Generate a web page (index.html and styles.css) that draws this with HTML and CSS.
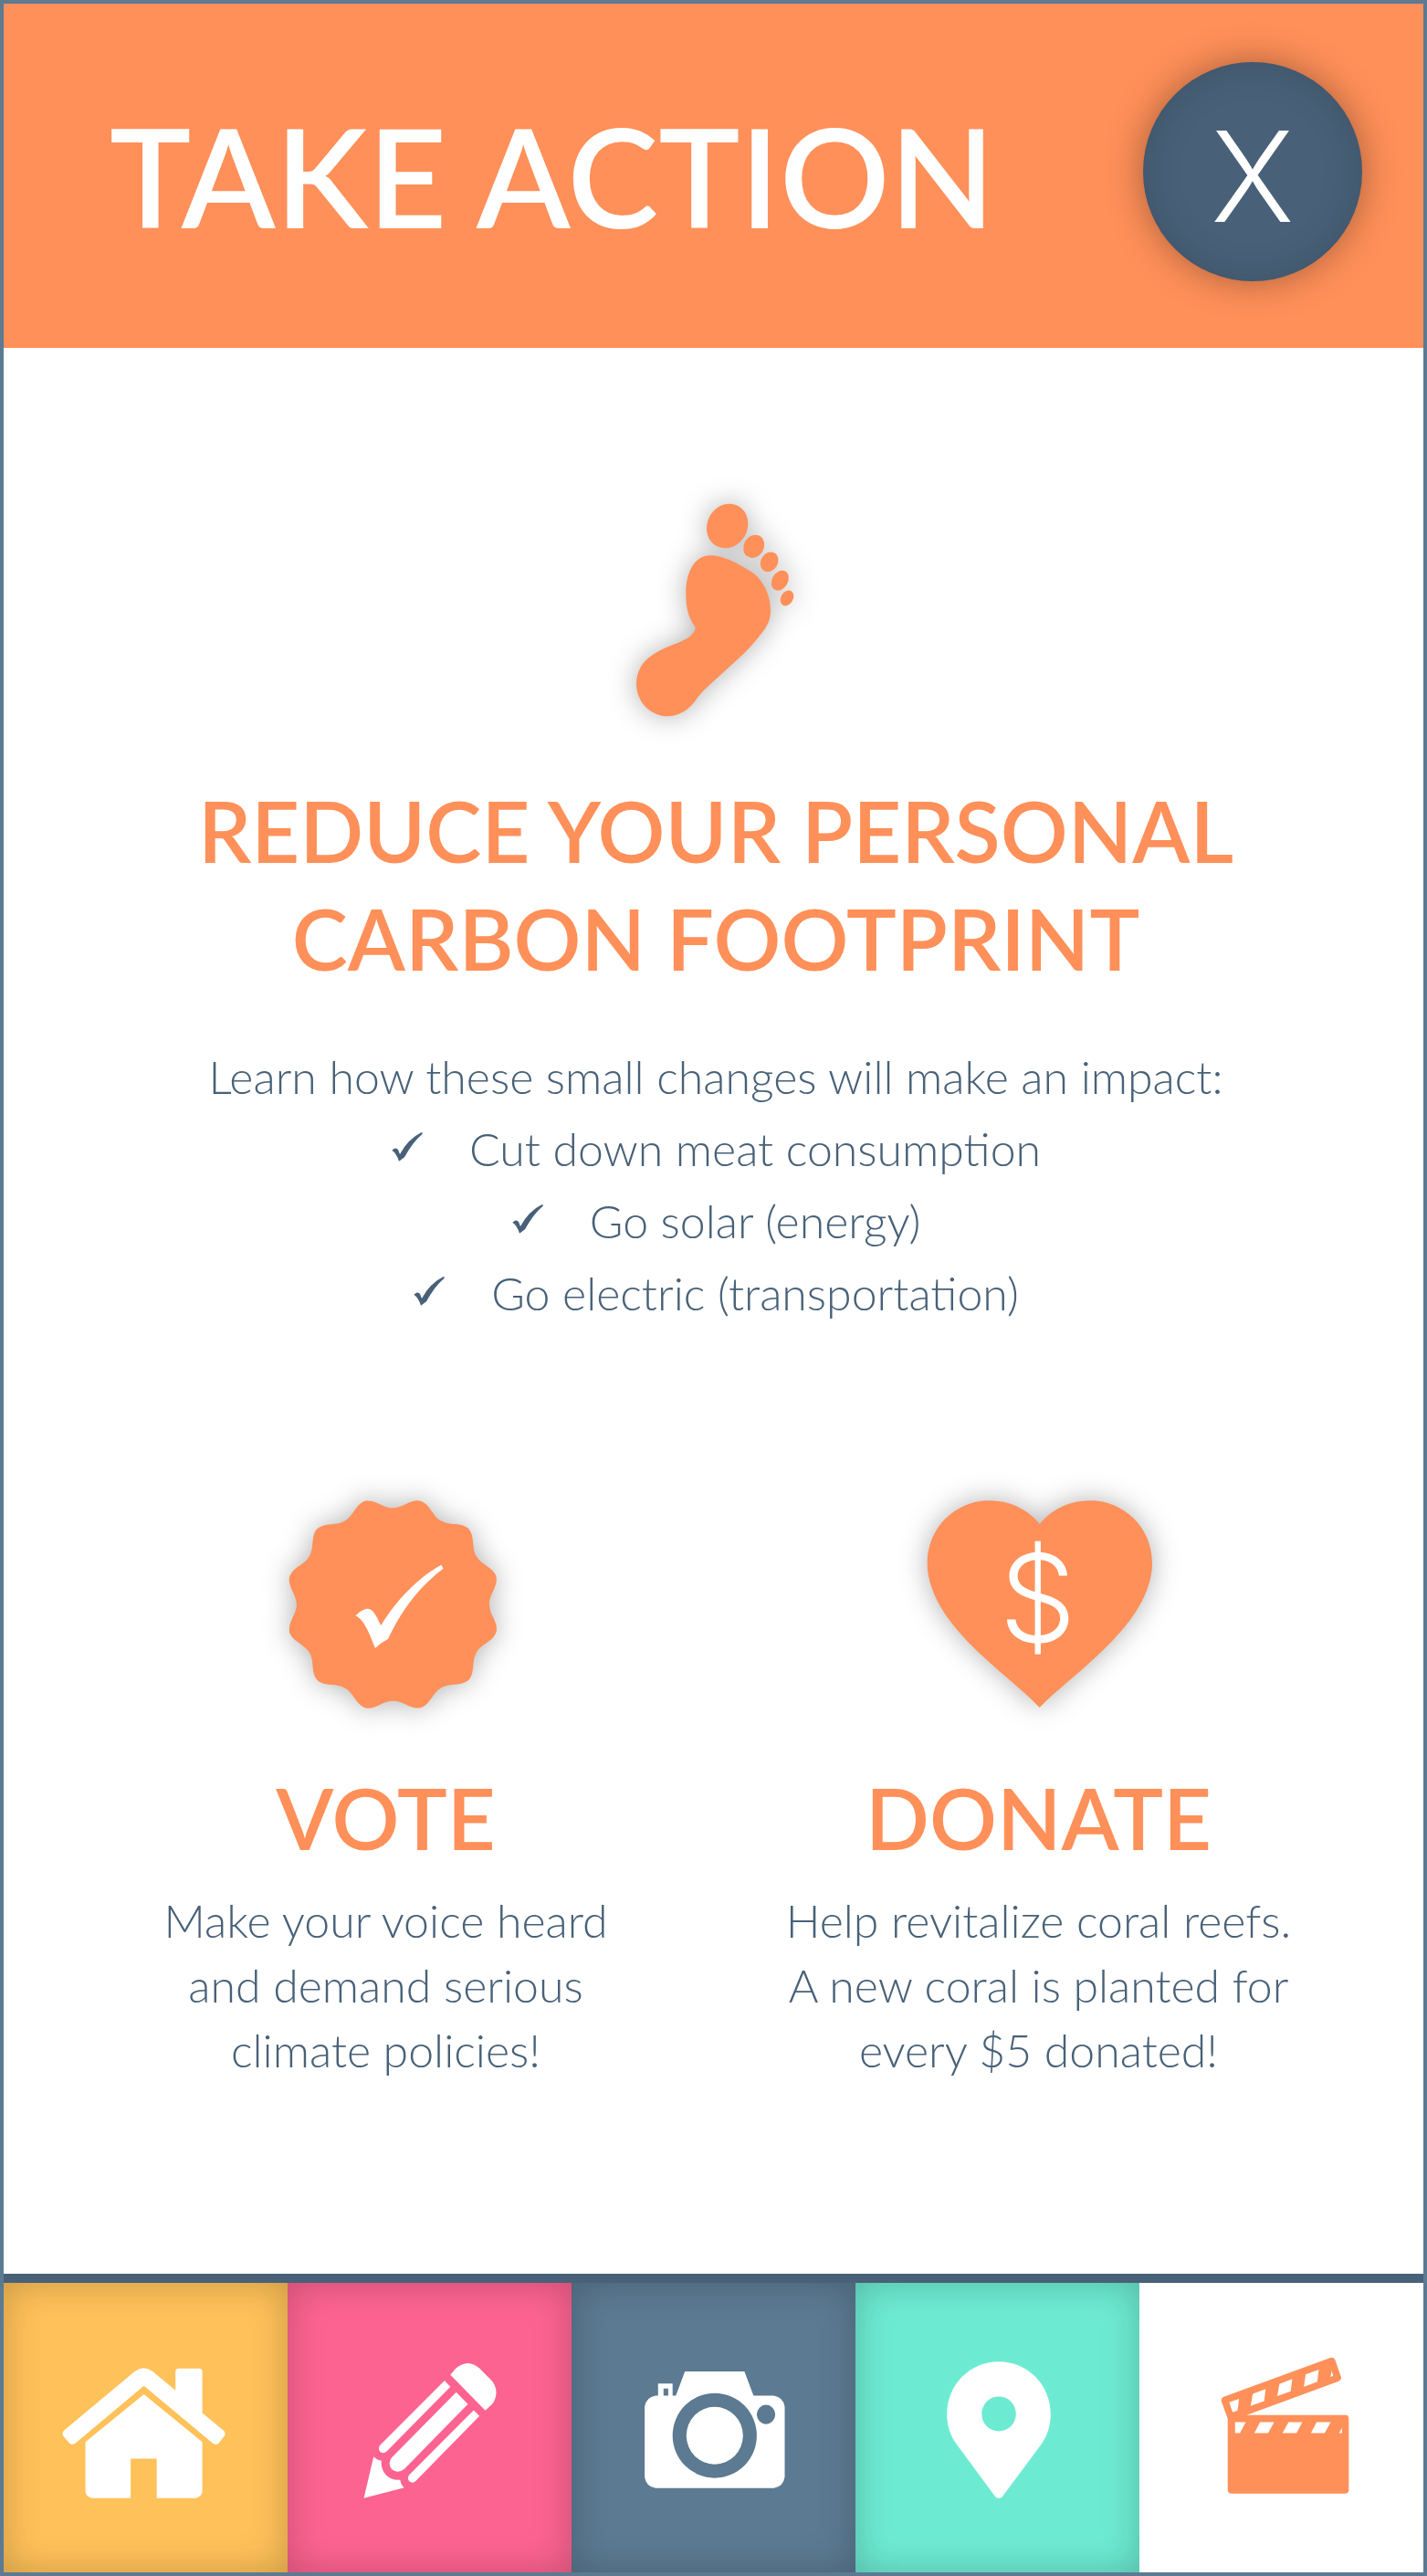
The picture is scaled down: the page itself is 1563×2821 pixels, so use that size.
FILE: index.html
```html
<!DOCTYPE html>
<html lang="en">
<head>
<meta charset="utf-8">
<meta name="viewport" content="width=device-width, initial-scale=1">
<title>Take Action</title>
<link rel="stylesheet" href="styles.css">
</head>
<body>
<div class="screen">
  <header class="header">
    <h1 class="title">TAKE ACTION</h1>
    <button class="close" type="button" aria-label="Close">X</button>
  </header>

  <main class="main">
    <section class="reduce">
      <svg class="icon foot" viewBox="10 0 720 870" aria-hidden="true">
        <path d="M352 265C400 265 450 297 478 313C522 338 550 390 550 445C550 468 545 485 532 505C510 535 490 560 462 587L350 690C330 708 315 722 303 742C280 773 250 793 212 793C155 793 109 745 109 686C109 650 127 615 158 595C200 565 240 558 275 538C290 529 306 513 302 499C285 475 272 450 272 388C272 320 300 265 352 265Z"/>
        <ellipse cx="408" cy="168" rx="66" ry="75" transform="rotate(28 408 168)"/>
        <ellipse cx="495" cy="235" rx="33" ry="39" transform="rotate(30 495 235)"/>
        <ellipse cx="546" cy="286" rx="28" ry="34" transform="rotate(30 546 286)"/>
        <ellipse cx="581" cy="347" rx="26" ry="35" transform="rotate(30 581 347)"/>
        <ellipse cx="604" cy="405" rx="20" ry="27" transform="rotate(30 604 405)"/>
      </svg>
      <h2 class="heading">REDUCE YOUR PERSONAL<br>CARBON FOOTPRINT</h2>
      <p class="lead">Learn how these small changes will make an impact:</p>
      <ul class="tips">
        <li class="tip"><svg class="tick" viewBox="54 50 106 120" aria-hidden="true"><path id="tick" d="M57 112L65 106Q73 104 77 110L83 125Q110 75 153 54H157V58Q125 85 98 135L80 148Q72 122 57 112Z"/></svg>Cut down meat consumption</li>
        <li class="tip"><svg class="tick" viewBox="54 50 106 120" aria-hidden="true"><use href="#tick"/></svg>Go solar (energy)</li>
        <li class="tip"><svg class="tick" viewBox="54 50 106 120" aria-hidden="true"><use href="#tick"/></svg>Go electric (transportation)</li>
      </ul>
    </section>

    <div class="actions">
      <section class="action">
        <svg class="icon badge" viewBox="-48 0 888 870" aria-hidden="true">
          <defs>
            <path id="lobe" d="M0 0L0 -317C32 -317 52 -341 82 -341Q91 -341 99 -336C125 -321 131 -290 158 -274Z"/>
          </defs>
          <g transform="translate(418 441)">
            <circle r="316"/>
            <use href="#lobe"/>
            <use href="#lobe" transform="rotate(30)"/>
            <use href="#lobe" transform="rotate(60)"/>
            <use href="#lobe" transform="rotate(90)"/>
            <use href="#lobe" transform="rotate(120)"/>
            <use href="#lobe" transform="rotate(150)"/>
            <use href="#lobe" transform="rotate(180)"/>
            <use href="#lobe" transform="rotate(210)"/>
            <use href="#lobe" transform="rotate(240)"/>
            <use href="#lobe" transform="rotate(270)"/>
            <use href="#lobe" transform="rotate(300)"/>
            <use href="#lobe" transform="rotate(330)"/>
          </g>
          <path class="white" d="M295 478C310 463 325 455 336 455C356 455 368 490 379 510C430 425 505 350 577 311L584 323C515 375 450 450 402 555C385 563 372 574 360 585C345 548 325 490 295 478Z"/>
        </svg>
        <h2 class="heading">VOTE</h2>
        <p class="text">Make your voice heard<br>and demand serious<br>climate policies!</p>
      </section>
      <section class="action">
        <svg class="icon heart" viewBox="0 0 930 870" aria-hidden="true">
          <path d="M467 177C510 125 570 100 633 100C745 100 837 190 837 305C837 420 745 530 645 620C580 680 520 725 467 780C415 725 355 680 290 620C190 530 98 420 98 305C98 190 190 100 302 100C365 100 425 125 467 177Z"/>
          <text class="dollar" x="461" y="565">$</text>
        </svg>
        <h2 class="heading">DONATE</h2>
        <p class="text">Help revitalize coral reefs.<br>A new coral is planted for<br>every $5 donated!</p>
      </section>
    </div>
  </main>

  <nav class="nav" aria-label="Main">
    <a class="tab home" href="#home" aria-label="Home">
      <svg class="glyph" viewBox="10 90 770 948" preserveAspectRatio="none" aria-hidden="true">
        <path d="M364 380Q388 358 413 380L475 442V380Q475 370 484 370H539Q548 370 548 380V516L606 574Q613 583 608 592L594 613Q586 623 576 615L389 427L203 615Q193 623 185 613L170 592Q165 582 172 573Z"/>
        <path d="M389 455L548 611V774Q546 791 530 795H424V666H353V795H248Q232 791 230 774V611Z"/>
      </svg>
    </a>
    <a class="tab edit" href="#edit" aria-label="Edit">
      <svg class="glyph" viewBox="780 90 778 948" preserveAspectRatio="none" aria-hidden="true">
        <path d="M1225 391L1239 371Q1256 353 1273 353Q1290 354 1304 369L1338 409Q1351 427 1351 450Q1350 474 1338 489L1321 508Z"/>
        <path d="M1209 410L1225 430L1050 642Q1041 651 1032 643Q1025 633 1031 622Z"/>
        <path d="M1241 448L1273 487L1098 700Q1080 716 1064 701Q1051 681 1064 662Z"/>
        <path d="M1289 507L1305 526L1129 740Q1121 748 1112 740Q1105 730 1112 719Z"/>
        <path d="M1014 659Q1023 671 1035 672Q1034 705 1050 721Q1064 738 1087 735Q1089 751 1098 761L987 795Z"/>
      </svg>
    </a>
    <a class="tab photo" href="#photo" aria-label="Camera">
      <svg class="glyph" viewBox="0 90 780 948" preserveAspectRatio="none" aria-hidden="true">
        <path fill-rule="evenodd" d="M199 495Q203 464 229 459H236V420H276V459H285L310 380H474L499 459H555Q581 464 585 495V726Q581 757 555 762H229Q203 757 199 726ZM251 436V459H264V436ZM276 590A116 139 0 0 0 508 590A116 139 0 0 0 276 590ZM508 521A25 31 0 0 0 559 521A25 31 0 0 0 508 521Z"/>
        <ellipse cx="392" cy="590" rx="78" ry="94"/>
      </svg>
    </a>
    <a class="tab map" href="#map" aria-label="Map">
      <svg class="glyph" viewBox="780 90 775 948" preserveAspectRatio="none" aria-hidden="true">
        <path fill-rule="evenodd" d="M1170 348C1250 348 1312 425 1312 520C1312 558 1303 590 1286 619L1178 793Q1170 797 1162 793L1055 619C1037 590 1028 558 1028 520C1028 425 1090 348 1170 348ZM1123 519A47 57 0 0 0 1217 519A47 57 0 0 0 1123 519Z"/>
      </svg>
    </a>
    <a class="tab act" href="#act" aria-label="Take action" aria-current="page">
      <svg class="glyph" viewBox="29 90 926 948" preserveAspectRatio="none" aria-hidden="true">
        <path fill-rule="evenodd" d="M315 535L294 477Q293 467 302 463L651 335Q661 332 666 341L686 399Q687 408 678 412L377 523H701Q711 524 711 534V769Q710 779 701 780H326Q316 779 315 769ZM320 481L352 470L347 508L331 514ZM397 453L439 438L434 477L390 493ZM484 421L526 405L521 445L477 461ZM570 390L613 374L608 414L564 430ZM655 378L660 394L651 398ZM339 546H374L355 582H339ZM421 546H467L447 582H402ZM514 546H559L540 582H494ZM606 546H652L632 582H587ZM689 565V582H679Z"/>
      </svg>
    </a>
  </nav>
</div>
</body>
</html>
```
FILE: styles.css
```css
:root {
  --orange: #ff9059;
  --navy: #486178;
  --slate: #5c7a92;
}

* {
  box-sizing: border-box;
}

body {
  margin: 0;
  font-family: Lato, "Open Sans", sans-serif;
  color: var(--navy);
  background: #fff;
}

h1, h2, p, ul {
  margin: 0;
  padding: 0;
}

.screen {
  display: flex;
  flex-direction: column;
  min-height: 100vh;
  border: 4px solid var(--slate);
}

.header {
  display: flex;
  align-items: center;
  justify-content: space-between;
  padding: 64px 67px 73px 116px;
  background: var(--orange);
}

.title {
  padding-top: 8px;
  font-size: 150px;
  font-weight: 600;
  line-height: 180px;
  color: #fff;
}

.close {
  width: 240px;
  height: 240px;
  padding: 8px 0 0;
  border: 0;
  border-radius: 50%;
  font-family: Inter, sans-serif;
  font-size: 138px;
  font-weight: 300;
  color: #fff;
  background: var(--navy);
  box-shadow: 0 0 40px rgba(0, 0, 0, .35), inset 0 0 40px rgba(0, 0, 0, .15);
}

.main {
  flex: 1;
  text-align: center;
}

.reduce {
  padding: 139px 0 0 5px;
}

.icon {
  display: block;
  height: 290px;
  margin: 0 auto;
  overflow: visible;
  fill: var(--orange);
  filter: drop-shadow(0 0 15px rgba(0, 0, 0, .3));
}

.foot {
  width: 240px;
}

.badge {
  width: 296px;
}

.heart {
  width: 310px;
}

.white {
  fill: #fff;
}

.dollar {
  font-family: Inter, sans-serif;
  font-size: 400px;
  font-weight: 300;
  fill: #fff;
  text-anchor: middle;
}

.heading {
  padding-top: 41px;
  font-size: 92px;
  font-weight: 600;
  line-height: 118px;
  color: var(--orange);
}

.lead,
.tip,
.text {
  font-size: 50px;
  font-weight: 300;
}

.lead {
  padding-top: 53px;
  line-height: 79px;
}

.tips {
  list-style: none;
}

.tip {
  display: flex;
  justify-content: center;
  align-items: center;
  gap: 50px;
  line-height: 79px;
}

.tick {
  width: 36px;
  height: 40px;
  fill: var(--navy);
}

.actions {
  display: grid;
  grid-template-columns: 1fr 1fr;
  padding: 154px 64px 180px 61px;
}

.action .heading {
  padding-top: 32px;
}

.text {
  padding-top: 18px;
  line-height: 71px;
}

.nav {
  display: grid;
  grid-template-columns: repeat(5, 1fr);
  border-top: 10px solid var(--navy);
}

.tab {
  display: flex;
  justify-content: center;
  fill: #fff;
  box-shadow: inset 0 0 40px rgba(0, 0, 0, .22);
}

.glyph {
  width: 310px;
  height: 317px;
}

.home { background: #ffc159; }
.edit { background: #fc6391; }
.photo { background: var(--slate); }
.map { background: #6debd2; }

.act {
  fill: var(--orange);
  background: #fff;
  box-shadow: none;
}
```
